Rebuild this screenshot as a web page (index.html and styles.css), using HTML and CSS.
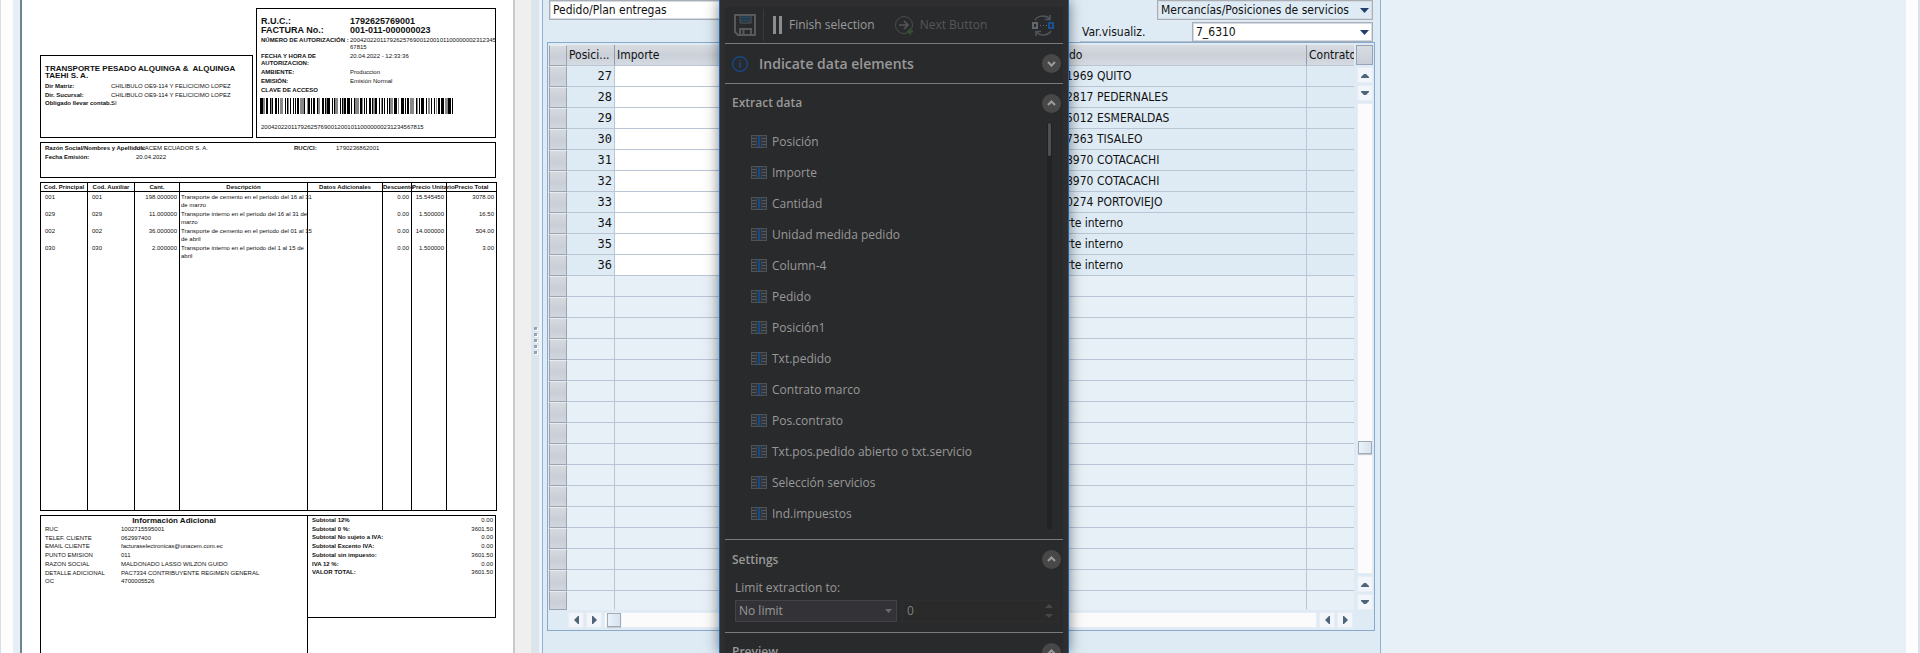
FILE: index.html
```html
<!DOCTYPE html>
<html lang="es">
<head>
<meta charset="utf-8">
<title>Extract data</title>
<link rel="stylesheet" href="styles.css">
</head>
<body>
<svg class="defs" aria-hidden="true">
  <symbol id="up" viewBox="0 0 8 5"><path d="M0 5v-1l3-3h2l3 3v1z"/></symbol>
  <symbol id="down" viewBox="0 0 8 5"><path d="M0 0v1l3 3h2l3-3v-1z"/></symbol>
  <symbol id="left" viewBox="0 0 5 8"><path d="M5 0h-1l-4 4 4 4h1z"/></symbol>
  <symbol id="right" viewBox="0 0 5 8"><path d="M0 0h1l4 4-4 4h-1z"/></symbol>
  <symbol id="column" viewBox="0 0 16 13">
    <rect x="0.5" y="0.5" width="15" height="12" fill="#303437" stroke="#4c5257"/>
    <path d="M1 3.5h4M1 6.500h4M1 9.500h4M11 3.500h4M11 6.500h4M11 9.500h4" stroke="#53595e"/>
    <path d="M5.500 1v11M10.500 1v11" stroke="#3c4145"/>
    <rect x="7" y="1" width="2" height="11" fill="#134a8e"/>
  </symbol>
  <symbol id="chev-up" viewBox="0 0 19 19"><circle cx="9.5" cy="9.500" r="9.500" fill="#484848"/><path d="M6 11l3.500-3.500 3.500 3.500" fill="none" stroke="#9c9c9c" stroke-width="2"/></symbol>
  <symbol id="chev-down" viewBox="0 0 19 19"><circle cx="9.500" cy="9.500" r="9.500" fill="#484848"/><path d="M6 8l3.500 3.500 3.500-3.500" fill="none" stroke="#9c9c9c" stroke-width="2"/></symbol>
</svg>
<div class="app">
  <div class="gutter"></div>
  <main class="doc">
    <div class="doc-top">
      <section class="box company">
        <h1>TRANSPORTE PESADO ALQUINGA &amp;&nbsp; ALQUINGA TAEHI S. A.</h1>
        <dl class="pairs company-pairs">
          <dt>Dir Matriz:</dt><dd>CHILIBULO OE9-114 Y FELICICIMO LOPEZ</dd>
          <dt>Dir. Sucursal:</dt><dd>CHILIBULO OE9-114 Y FELICICIMO LOPEZ</dd>
          <dt>Obligado llevar contab.:</dt><dd>SI</dd>
        </dl>
      </section>
      <section class="box ruc">
        <dl class="pairs ruc-head">
          <dt>R.U.C.:</dt><dd>1792625769001</dd>
          <dt>FACTURA No.:</dt><dd>001-011-000000023</dd>
        </dl>
        <dl class="pairs ruc-pairs">
          <dt>NÚMERO DE AUTORIZACIÓN :</dt><dd class="num">20042022011792625769001200101100000002312345<br>67815</dd>
          <dt>FECHA Y HORA DE<br>AUTORIZACION:</dt><dd>20.04.2022 - 12:33:36</dd>
          <dt>AMBIENTE:</dt><dd>Produccion</dd>
          <dt>EMISIÓN:</dt><dd>Emisión Normal</dd>
          <dt>CLAVE DE ACCESO</dt><dd></dd>
        </dl>
        <svg class="barcode" viewBox="0 0 193 16" preserveAspectRatio="none" aria-label="Clave de acceso">
          <path d="M0 8H193" stroke="#000" stroke-width="16" stroke-dasharray="3 1 1 1 2 2 1 1 1 2 2 1 1 1 3 2 1 1 2 1 1 2 1 1 1 1 2 1 3 1 1 2"/>
          <path d="M0 8H193" stroke="#888" stroke-width="16" stroke-dasharray="0 3 2 6 1 8 3 5 1 11 4 3 1 7"/>
        </svg>
        <p class="num">2004202201179262576900120010110000000231234567815</p>
      </section>
    </div>
    <section class="box client">
      <dl class="pairs">
        <dt>Razón Social/Nombres y Apellidos:</dt><dd>UNACEM ECUADOR S. A.</dd>
        <dt>RUC/CI:</dt><dd>1790236862001</dd>
        <dt>Fecha Emisión:</dt><dd>20.04.2022</dd>
      </dl>
    </section>
    <table class="lines">
      <colgroup><col class="l1"><col class="l2"><col class="l3"><col class="l4"><col class="l5"><col class="l6"><col class="l7"><col class="l8"></colgroup>
      <thead><tr><th>Cod. Principal</th><th>Cod. Auxiliar</th><th>Cant.</th><th>Descripción</th><th>Datos Adicionales</th><th>Descuento</th><th>Precio Unitario</th><th>Precio Total</th></tr></thead>
      <tbody>
        <tr><td>001</td><td>001</td><td class="r">198.000000</td><td class="d">Transporte de cemento en el periodo del 16 al 31<br>de marzo</td><td></td><td class="r">0.00</td><td class="r">15.545450</td><td class="r">3078.00</td></tr>
        <tr><td>029</td><td>029</td><td class="r">11.000000</td><td class="d">Transporte interno en el periodo del 16 al 31 de<br>marzo</td><td></td><td class="r">0.00</td><td class="r">1.500000</td><td class="r">16.50</td></tr>
        <tr><td>002</td><td>002</td><td class="r">36.000000</td><td class="d">Transporte de cemento en el periodo del 01 al 15<br>de abril</td><td></td><td class="r">0.00</td><td class="r">14.000000</td><td class="r">504.00</td></tr>
        <tr><td>030</td><td>030</td><td class="r">2.000000</td><td class="d">Transporte interno en el periodo del 1 al 15 de<br>abril</td><td></td><td class="r">0.00</td><td class="r">1.500000</td><td class="r">3.00</td></tr>
        <tr class="rest"><td></td><td></td><td></td><td></td><td></td><td></td><td></td><td></td></tr>
      </tbody>
    </table>
    <div class="doc-foot">
      <section class="box extra">
        <h2>Información Adicional</h2>
        <dl class="pairs">
          <dt>RUC</dt><dd>1002715595001</dd>
          <dt>TELEF. CLIENTE</dt><dd>062997400</dd>
          <dt>EMAIL CLIENTE</dt><dd>facturaselectronicas@unacem.com.ec</dd>
          <dt>PUNTO EMISION</dt><dd>011</dd>
          <dt>RAZON SOCIAL</dt><dd>MALDONADO LASSO WILZON GUIDO</dd>
          <dt>DETALLE ADICIONAL</dt><dd>PAC7334 CONTRIBUYENTE REGIMEN GENERAL</dd>
          <dt>OC</dt><dd>4700005526</dd>
        </dl>
      </section>
      <section class="box totals">
        <dl class="pairs">
          <dt>Subtotal 12%</dt><dd>0.00</dd>
          <dt>Subtotal 0 %:</dt><dd>3601.50</dd>
          <dt>Subtotal No sujeto a IVA:</dt><dd>0.00</dd>
          <dt>Subtotal Excento IVA:</dt><dd>0.00</dd>
          <dt>Subtotal sin impuesto:</dt><dd>3601.50</dd>
          <dt>IVA 12 %:</dt><dd>0.00</dd>
          <dt>VALOR TOTAL:</dt><dd>3601.50</dd>
        </dl>
      </section>
    </div>
  </main>
  <div class="doc-edge"></div>
  <div class="splitter"><i></i><i></i><i></i><i></i><i></i></div>
  <section class="sap">
    <div class="sap-row">
      <input class="field plan" aria-label="Documento" value="Pedido/Plan entregas" readonly>
      <select class="field kind" aria-label="Tipo"><option>Mercancías/Posiciones de servicios</option></select>
    </div>
    <div class="sap-row second">
      <label for="variant">Var.visualiz.</label>
      <select class="field variant" id="variant"><option>7_6310</option></select>
    </div>
    <div class="grid-box">
      <table class="grid">
        <colgroup><col class="g0"><col class="g1"><col class="g2"><col class="g3"><col class="g4"></colgroup>
        <thead><tr><th class="sel"></th><th>Posici...</th><th>Importe</th><th class="txt">ido</th><th>Contrato</th></tr></thead>
        <tbody>
          <tr><th class="sel"></th><td class="n">27</td><td class="w"></td><td class="txt">1969 QUITO</td><td></td></tr>
          <tr><th class="sel"></th><td class="n">28</td><td class="w"></td><td class="txt">2817 PEDERNALES</td><td></td></tr>
          <tr><th class="sel"></th><td class="n">29</td><td class="w"></td><td class="txt">5012 ESMERALDAS</td><td></td></tr>
          <tr><th class="sel"></th><td class="n">30</td><td class="w"></td><td class="txt">7363 TISALEO</td><td></td></tr>
          <tr><th class="sel"></th><td class="n">31</td><td class="w"></td><td class="txt">8970 COTACACHI</td><td></td></tr>
          <tr><th class="sel"></th><td class="n">32</td><td class="w"></td><td class="txt">8970 COTACACHI</td><td></td></tr>
          <tr><th class="sel"></th><td class="n">33</td><td class="w"></td><td class="txt">0274 PORTOVIEJO</td><td></td></tr>
          <tr><th class="sel"></th><td class="n">34</td><td class="w"></td><td class="txt">rte interno</td><td></td></tr>
          <tr><th class="sel"></th><td class="n">35</td><td class="w"></td><td class="txt">rte interno</td><td></td></tr>
          <tr><th class="sel"></th><td class="n">36</td><td class="w"></td><td class="txt">rte interno</td><td></td></tr>
        </tbody>
        <tbody class="empty">
          <tr><th class="sel"></th><td></td><td></td><td></td><td></td></tr>
          <tr><th class="sel"></th><td></td><td></td><td></td><td></td></tr>
          <tr><th class="sel"></th><td></td><td></td><td></td><td></td></tr>
          <tr><th class="sel"></th><td></td><td></td><td></td><td></td></tr>
          <tr><th class="sel"></th><td></td><td></td><td></td><td></td></tr>
          <tr><th class="sel"></th><td></td><td></td><td></td><td></td></tr>
          <tr><th class="sel"></th><td></td><td></td><td></td><td></td></tr>
          <tr><th class="sel"></th><td></td><td></td><td></td><td></td></tr>
          <tr><th class="sel"></th><td></td><td></td><td></td><td></td></tr>
          <tr><th class="sel"></th><td></td><td></td><td></td><td></td></tr>
          <tr><th class="sel"></th><td></td><td></td><td></td><td></td></tr>
          <tr><th class="sel"></th><td></td><td></td><td></td><td></td></tr>
          <tr><th class="sel"></th><td></td><td></td><td></td><td></td></tr>
          <tr><th class="sel"></th><td></td><td></td><td></td><td></td></tr>
          <tr><th class="sel"></th><td></td><td></td><td></td><td></td></tr>
          <tr class="last"><th class="sel"></th><td></td><td></td><td></td><td></td></tr>
        </tbody>
      </table>
      <div class="vbar">
        <button class="corner" aria-label="Configurar columnas"></button>
        <button aria-label="Primera"><svg width="8" height="5"><use href="#up"/></svg></button>
        <button aria-label="Arriba"><svg width="8" height="5"><use href="#down"/></svg></button>
        <div class="track"><span class="thumb"></span></div>
        <button aria-label="Abajo"><svg width="8" height="5"><use href="#up"/></svg></button>
        <button aria-label="Última"><svg width="8" height="5"><use href="#down"/></svg></button>
      </div>
      <div class="hbar">
        <button aria-label="Inicio"><svg width="5" height="8"><use href="#left"/></svg></button>
        <button aria-label="Izquierda"><svg width="5" height="8"><use href="#right"/></svg></button>
        <div class="track"><span class="thumb"></span></div>
        <button aria-label="Derecha"><svg width="5" height="8"><use href="#left"/></svg></button>
        <button aria-label="Fin"><svg width="5" height="8"><use href="#right"/></svg></button>
      </div>
    </div>
    <aside class="wizard">
      <div class="wizard-body">
        <div class="toolbar">
          <button class="save" aria-label="Save"><svg width="22" height="22" viewBox="0 0 22 22" fill="none"><path d="M1 1h20v20H4l-3-3z" stroke="#575a5d" stroke-width="2"/><path d="M6 2v7h11V2" stroke="#575a5d" stroke-width="1"/><path d="M7 3.500h9M7 6.500h9" stroke="#244c68" stroke-width="2"/><path d="M6 21v-6h11v6M9.500 16v4" stroke="#575a5d" stroke-width="2"/></svg></button>
          <button class="finish"><svg width="10" height="18"><path d="M0 0h3v18H0zM6 0h3v18H6z" fill="#8c8c8c"/></svg>Finish selection</button>
          <button class="next" disabled><svg width="19" height="19" viewBox="0 0 19 19" fill="none"><circle cx="9" cy="9" r="8.500" stroke="#4b4b4d"/><path d="M4 9h9M9 5l4 4-4 4" stroke="#57575a" stroke-width="1.500"/><path d="M12 15.500h6M15 12.500v6" stroke="#35512f" stroke-width="2"/></svg>Next Button</button>
          <button class="swap" aria-label="Switch"><svg width="22" height="21" viewBox="0 0 22 21" fill="none"><rect x="1" y="8" width="4" height="5" stroke="#62676c" stroke-width="2"/><rect x="17" y="8" width="4" height="5" stroke="#1a4f91" stroke-width="2"/><path d="M8 10.500h1M11 10.500h1M14 10.500h1" stroke="#62676c"/><path d="M3 5c3-5 11-5 15-1M18 0v4.500h-5M19 16c-3 5-11 5-15 1M4 21v-4.500h5" stroke="#4e565d" stroke-width="1.500"/></svg></button>
        </div>
        <div class="bar indicate">
          <svg width="16" height="16" viewBox="0 0 16 16" fill="none"><circle cx="8" cy="8" r="7.300" stroke="#164988" stroke-width="1.400"/><path d="M8 6.500v5.500M8 4v1.300" stroke="#164988" stroke-width="1.500"/></svg>
          <h2>Indicate data elements</h2>
          <button class="round" aria-label="Expand"><svg width="19" height="19"><use href="#chev-down"/></svg></button>
        </div>
        <div class="bar"><h3>Extract data</h3><button class="round" aria-label="Collapse"><svg width="19" height="19"><use href="#chev-up"/></svg></button></div>
        <div class="list">
          <ul>
            <li><svg width="16" height="13"><use href="#column"/></svg>Posición</li>
            <li><svg width="16" height="13"><use href="#column"/></svg>Importe</li>
            <li><svg width="16" height="13"><use href="#column"/></svg>Cantidad</li>
            <li><svg width="16" height="13"><use href="#column"/></svg>Unidad medida pedido</li>
            <li><svg width="16" height="13"><use href="#column"/></svg>Column-4</li>
            <li><svg width="16" height="13"><use href="#column"/></svg>Pedido</li>
            <li><svg width="16" height="13"><use href="#column"/></svg>Posición1</li>
            <li><svg width="16" height="13"><use href="#column"/></svg>Txt.pedido</li>
            <li><svg width="16" height="13"><use href="#column"/></svg>Contrato marco</li>
            <li><svg width="16" height="13"><use href="#column"/></svg>Pos.contrato</li>
            <li><svg width="16" height="13"><use href="#column"/></svg>Txt.pos.pedido abierto o txt.servicio</li>
            <li><svg width="16" height="13"><use href="#column"/></svg>Selección servicios</li>
            <li><svg width="16" height="13"><use href="#column"/></svg>Ind.impuestos</li>
          </ul>
          <div class="rail"><span></span></div>
        </div>
        <div class="bar settings"><h3>Settings</h3><button class="round" aria-label="Collapse"><svg width="19" height="19"><use href="#chev-up"/></svg></button></div>
        <div class="limit">
          <label for="limit">Limit extraction to:</label>
          <div class="limit-row">
            <select id="limit"><option>No limit</option></select>
            <div class="spin"><input type="text" aria-label="Limit" value="0" disabled><span><svg width="8" height="4"><path d="M0 4l4-4 4 4z"/></svg><svg width="8" height="4"><path d="M0 0l4 4 4-4z"/></svg></span></div>
          </div>
        </div>
        <div class="bar preview"><h3>Preview</h3><button class="round" aria-label="Collapse"><svg width="19" height="19"><use href="#chev-up"/></svg></button></div>
      </div>
    </aside>
  </section>
  <div class="backdrop"></div>
</div>
</body>
</html>
```
FILE: styles.css
```css
* { box-sizing: border-box; }
body, h1, h2, h3, p, dl, dd, ul { margin: 0; padding: 0; }
body { overflow: hidden; background: #e8f0f7; }
button { margin: 0; padding: 0; border: 0; background: none; font: inherit; color: inherit; }
svg { display: block; flex: none; }
.defs { display: none; }
.app { display: flex; height: 100vh; overflow: hidden; }

/* left edge */
.gutter { flex: none; width: 22px; background: #e6eef6; border-left: 1px solid #d5dfea; border-right: 2px solid #6f8592; box-shadow: inset 12px 0 #fdfdfd; }

/* invoice */
.doc { flex: none; width: 491px; padding: 8px 17px 0 18px; background: #fff; color: #111; font: 6px/8px "Liberation Sans", Arial, sans-serif; display: flex; flex-direction: column; gap: 4px; white-space: nowrap; }
.box { border: 1px solid #000; }
.doc-top { display: grid; grid-template-columns: 1fr 240px; gap: 3px; }
.company { align-self: end; height: 83px; padding: 9px 4px; }
.company h1 { font-size: 8px; line-height: 7px; font-weight: bold; white-space: normal; }
.pairs { display: grid; }
.company-pairs { grid-template-columns: 66px 1fr; grid-auto-rows: 1fr; height: 26px; margin-top: 3px; }
.company-pairs dt, .ruc-pairs dt, .client dt, .totals dt { font-weight: bold; }
.ruc { height: 130px; padding: 8px 4px 0; }
.ruc .pairs { grid-template-columns: 89px 1fr; }
.ruc-head { font-size: 9px; line-height: 9px; font-weight: bold; }
.ruc-pairs { margin-top: 2px; row-gap: 1px; line-height: 7px; }
.ruc .ruc-pairs { row-gap: 2px; }
.barcode { width: 193px; height: 16px; margin: 4px 0 9px -1px; }
.client { height: 36px; padding: 1px 4px; }
.client .pairs { grid-template-columns: 91px 158px 42px 1fr; line-height: 9px; }
.lines { height: 329px; table-layout: fixed; width: 100%; border-collapse: collapse; border: 1px solid #000; }
.l1, .l2 { width: 47px; } .l3 { width: 45px; } .l4 { width: 128px; } .l5 { width: 75px; } .l6 { width: 29px; } .l7 { width: 35px; } .l8 { width: 50px; }
.lines th { height: 8px; padding: 1px 0 0; line-height: 7px; border: 1px solid #000; font-weight: bold; }
.lines td { height: 16px; padding: 1px 2px 0 4px; line-height: 8px; vertical-align: top; border-left: 1px solid #000; }
.lines td.r { padding-left: 0; text-align: right; }
.lines td.d { padding: 1px 0 0 1px; }
.lines .rest td { height: auto; }
.doc-foot { display: grid; grid-template-columns: 267px 1fr; flex: 1; }
.extra { padding: 0 4px; border-right: 0; border-bottom: 0; }
.extra h2 { font-size: 8px; line-height: 9px; text-align: center; font-weight: bold; }
.extra .pairs { grid-template-columns: 76px 1fr; grid-auto-rows: 1fr; height: 61px; }
.doc-foot { align-items: stretch; }
.totals { height: 103px; padding: 0 2px 0 4px; }
.extra { border-right: 1px solid #000; margin-right: -1px; }
.totals .pairs { grid-template-columns: 1fr auto; grid-auto-rows: 1fr; height: 61px; }
.totals dd { text-align: right; }

.doc-edge { flex: none; width: 19px; background: #efefef; border-left: 2px solid #c9c9c9; border-right: 1px solid #dfe6ec; }
.splitter { flex: none; width: 10px; background: #dae5ec; border-right: 3px solid #edf3f8; display: flex; flex-direction: column; align-items: center; gap: 3px; padding-top: 327px; }
.splitter i { width: 3px; height: 3px; background: #94a3b6; box-shadow: 1px 1px #fff; }

/* order positions */
.sap { flex: none; position: relative; width: 839px; background: #deebf5; border: solid #8fb1d3; border-width: 0 1px; padding: 0 5px 0 4px; font: 12px/16px "DejaVu Sans Condensed", "DejaVu Sans", sans-serif; color: #111; }
.sap-row { display: flex; justify-content: space-between; align-items: center; padding: 0 2px; height: 20px; }
.second { justify-content: flex-end; height: 22px; align-items: flex-end; }
.second label { width: 112px; height: 20px; padding: 2px; border-bottom: 1px solid #b4bfcc; }
.field { appearance: none; height: 20px; margin: 0; padding: 0 3px; border: 1px solid #a9aeb5; border-bottom-width: 1px; border-radius: 0; background: #fff; font: inherit; color: #111; outline: 1px solid #d3dae1; outline-offset: -2px; }
.plan { width: 200px; }
.kind, .variant { background: #fff url("data:image/svg+xml,%3Csvg xmlns='http://www.w3.org/2000/svg' width='9' height='5'%3E%3Cpath d='M0 0h9L4.500 5z' fill='%23253f6d'/%3E%3C/svg%3E") no-repeat right 3px center; }
.kind { width: 216px; background-color: #deebf5; }
.variant { width: 181px; height: 20px; }
.grid-box { display: grid; grid-template-columns: 1fr 17px; column-gap: 2px; border: 1px solid #8aaacb; padding: 2px 1px 2px; }
.grid { width: 100%; table-layout: fixed; border-collapse: separate; border-spacing: 0; }
.g0 { width: 18px; } .g1 { width: 48px; } .g2 { width: 120px; } .g4 { width: 47px; }
.grid th, .grid td { height: 21px; padding: 0 2px; line-height: 19px; border: solid #bac6d6; border-width: 0 1px 1px 0; font-weight: normal; text-align: left; white-space: nowrap; overflow: hidden; background: #deebf5; }
.grid thead th { background: linear-gradient(#d9dde1, #cbd0d9 50%, #d5dbe1); border-right-color: #8f9db0; }
.grid th:last-child, .grid td:last-child { border-right: 0; }
.grid .sel, .grid thead .sel { background: linear-gradient(#d6dade, #c9ced8 60%, #d2d7de); border: 1px solid #9aa5b3; border-top-color: #e9edf1; }
.grid td.n { text-align: right; font-family: "DejaVu Sans Mono", monospace; }
.grid td.w { background: #fff; }
.grid .txt { padding-left: 331px; }
.empty td { background: #e8f0f7; }
.grid .last th, .grid .last td { height: 19px; border-bottom-color: #e8f0f7; }
.grid .last .sel { border-bottom-color: #9aa5b3; }
.vbar { display: flex; flex-direction: column; align-items: center; gap: 2px; }
.vbar button, .hbar button { width: 16px; height: 16px; display: grid; place-items: center; background: #f2f5fa; border: 1px solid #e8edf5; fill: #4f6477; }
.vbar .corner { width: 17px; height: 20px; background: linear-gradient(#d8dde2, #c8ced8); border: 1px solid #96a3b5; }
.track { background: #fbfbfc; border: 1px solid #e8edf5; }
.vbar .track { flex: 1; width: 16px; padding-top: 337px; }
.thumb { display: block; width: 14px; height: 13px; background: linear-gradient(90deg, #eaf2f9, #d6e3ee); border: 1px solid #9fabb9; box-shadow: 0 1px 1px #c5ccd5; }
.hbar { grid-column: 1; display: flex; gap: 2px; padding: 2px 1px 0 19px; }
.hbar .track { flex: 1; height: 16px; padding-left: 2px; }
.hbar .thumb { height: 14px; }

/* extraction dialog */
.wizard { position: absolute; left: 176px; top: 0; bottom: 0; width: 350px; padding: 7px 5px 0; background: #2e2e31; border: solid #1a63b0; border-width: 0 1px; box-shadow: 0 0 13px rgba(0,0,0,.5); color: #999; font: 12px/16px "Open Sans", "Noto Sans", sans-serif; overflow: hidden; }
.wizard-body { background: #292a2c; }
.toolbar { display: flex; align-items: center; height: 36px; padding: 0 9px; }
.save { width: 30px; height: 32px; border-right: 1px solid #3b3b3e; display: flex; align-items: center; }
.finish, .next { display: flex; align-items: center; }
.finish { gap: 6px; margin-left: 9px; color: #9b9b9b; }
.next { gap: 6px; margin-left: 20px; color: #56575a; }
.swap { margin-left: auto; }
.bar { display: flex; align-items: center; height: 39px; padding: 0 2px 0 7px; border-top: 1px solid #7a7a7a; }
.indicate { height: 40px; gap: 11px; }
.bar h2 { font-size: 14px; font-weight: 600; }
.bar h3 { font-size: 12px; font-weight: 600; }
.round { margin-left: auto; border-radius: 50%; }
.list { display: flex; justify-content: space-between; padding: 1px 11px 10px 26px; }
.list ul { list-style: none; padding-top: 3px; }
.list li { display: flex; align-items: center; gap: 5px; height: 31px; }
.rail { width: 5px; background: #222325; border-radius: 2px; padding: 0 1px; }
.rail span { display: block; height: 33px; background: #505051; border-radius: 2px; }
.settings { height: 40px; }
.limit { padding: 1px 4px 10px 10px; }
.limit label { display: block; line-height: 16px; }
.limit-row { display: grid; grid-template-columns: 162px 1fr; gap: 5px; margin-top: 4px; }
.limit select { appearance: none; height: 22px; padding: 0 3px; border: 1px solid #434346; border-radius: 0; background: #333337 url("data:image/svg+xml,%3Csvg xmlns='http://www.w3.org/2000/svg' width='7' height='4'%3E%3Cpath d='M0 0h7L3.500 4z' fill='%236a6a6a'/%3E%3C/svg%3E") no-repeat right 4px center; color: #999; font: inherit; }
.spin { display: flex; justify-content: space-between; align-items: center; height: 22px; padding: 0 5px 0 4px; border: 1px solid #2e2e2e; background: #2a2a2a; }
.spin input { width: 100px; padding: 0; border: 0; background: none; color: #808080; font: inherit; }
.spin span { display: grid; gap: 6px; fill: #474749; }

.backdrop { flex: 1; background: #e8f0f7; border-right: 2px solid #d9e2ec; box-shadow: inset -12px 0 #fdfdfd; }
```
